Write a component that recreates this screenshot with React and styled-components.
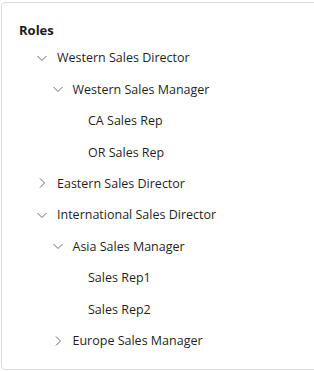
import styled, { createGlobalStyle } from "styled-components";

const GlobalStyle = createGlobalStyle`
  html, body {
    margin: 0;
    padding: 0;
    background: #ffffff;
  }
  body {
    font-family: "Open Sans", "Noto Sans", sans-serif;
    overflow: hidden;
  }
`;

const roles = [
  {
    label: "Western Sales Director",
    open: true,
    children: [
      {
        label: "Western Sales Manager",
        open: true,
        children: [{ label: "CA Sales Rep" }, { label: "OR Sales Rep" }],
      },
    ],
  },
  { label: "Eastern Sales Director", open: false, children: [{ label: "" }] },
  {
    label: "International Sales Director",
    open: true,
    children: [
      {
        label: "Asia Sales Manager",
        open: true,
        children: [{ label: "Sales Rep1" }, { label: "Sales Rep2" }],
      },
      { label: "Europe Sales Manager", open: false, children: [{ label: "" }] },
    ],
  },
];

const Chevron = ({ open }) => (
  <svg width="12" height="12" viewBox="0 0 12 12">
    {open ? (
      <path d="M1.5 4 L6 8.5 L10.5 4" fill="none" stroke="#6b6b6b" strokeWidth="1" />
    ) : (
      <path d="M4 1.5 L8.5 6 L4 10.5" fill="none" stroke="#6b6b6b" strokeWidth="1" />
    )}
  </svg>
);

const TreeNode = ({ node, level }) => {
  const hasChildren = node.children && node.children.length > 0;
  return (
    <>
      <Row level={level}>
        <Toggle>{hasChildren && <Chevron open={node.open} />}</Toggle>
        <Label>{node.label}</Label>
      </Row>
      {hasChildren &&
        node.open &&
        node.children.map((child) => (
          <TreeNode key={child.label} node={child} level={level + 1} />
        ))}
    </>
  );
};

const App = () => {
  return (
    <>
      <GlobalStyle />
      <Card>
        <Title>Roles</Title>
        <Tree>
          {roles.map((node) => (
            <TreeNode key={node.label} node={node} level={0} />
          ))}
        </Tree>
      </Card>
    </>
  );
};

const Card = styled.div`
  margin: 2px 0 0 1px;
  width: 320px;
  height: 368px;
  box-sizing: border-box;
  border: 1px solid #dcdcdc;
  border-radius: 4px;
  padding: 18px 0 0 17px;
`;

const Title = styled.div`
  font-size: 13px;
  font-weight: 700;
  color: #1a1a1a;
  line-height: 18px;
  margin-bottom: 3px;
`;

const Tree = styled.div`
  display: flex;
  flex-direction: column;
`;

const Row = styled.div`
  display: flex;
  align-items: center;
  height: 31.45px;
  padding-left: ${(props) => 17 + props.level * 15.5}px;
`;

const Toggle = styled.span`
  display: flex;
  align-items: center;
  justify-content: center;
  width: 12px;
  height: 12px;
  margin-right: 9px;
`;

const Label = styled.span`
  font-size: 12.5px;
  color: #1f1f1f;
  white-space: nowrap;
`;

export default App;
